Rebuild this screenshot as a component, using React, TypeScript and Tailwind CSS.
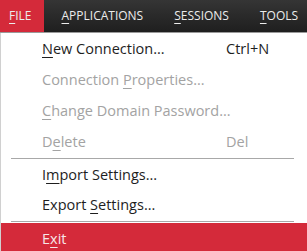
import React from "react";

const U = ({ children }: { children: React.ReactNode }) => (
  <span className="underline decoration-1 underline-offset-[3px]">{children}</span>
);

type Item = {
  pre: string;
  u: string;
  post: string;
  shortcut?: string;
  disabled?: boolean;
};

const Row = ({ it, h }: { it: Item; h: string }) => (
  <div className={`${h} flex items-center pl-[41px] ${it.disabled ? "text-[#a3a3a3]" : "text-[#1e1e1e]"}`}>
    <span className="w-[184px] whitespace-nowrap">
      {it.pre}
      <U>{it.u}</U>
      {it.post}
    </span>
    {it.shortcut && <span>{it.shortcut}</span>}
  </div>
);

const Sep = () => (
  <div className="h-[3px] flex items-center px-[10px]">
    <div className="h-px w-[283px] bg-[#a8a8a8]" />
  </div>
);

export default function App() {
  const top: Item[] = [
    { pre: "", u: "N", post: "ew Connection...", shortcut: "Ctrl+N" },
    { pre: "Connection ", u: "P", post: "roperties...", disabled: true },
    { pre: "", u: "C", post: "hange Domain Password...", disabled: true },
    { pre: "D", u: "e", post: "lete", shortcut: "Del", disabled: true },
  ];
  const mid: Item[] = [
    { pre: "I", u: "m", post: "port Settings..." },
    { pre: "Export ", u: "S", post: "ettings..." },
  ];
  return (
    <div className="w-[307px] h-[251px] overflow-hidden bg-white font-['Open_Sans','Noto_Sans',sans-serif]">
      <div className="h-[32px] flex items-stretch bg-gradient-to-b from-[#353535] to-[#1f1f1f] text-[12px] text-[#ececec]">
        <div className="bg-[#d42a3a] flex items-center pl-[9px] pr-[12px]">
          <span><U>F</U>ILE</span>
        </div>
        <div className="flex items-center pl-[18px] pr-[13px]">
          <span><U>A</U>PPLICATIONS</span>
        </div>
        <div className="flex items-center pl-[18px] pr-[13px]">
          <span><U>S</U>ESSIONS</span>
        </div>
        <div className="flex items-center pl-[18px] pr-[13px]">
          <span><U>T</U>OOLS</span>
        </div>
      </div>
      <div className="h-px bg-[#9a9a9a]" />
      <div className="text-[14.5px] border-l border-[#d0d0d0]">
        {top.map((it, i) => (
          <Row key={i} it={it} h="h-[31px]" />
        ))}
        <Sep />
        {mid.map((it, i) => (
          <Row key={i} it={it} h="h-[30px]" />
        ))}
        <Sep />
        <div className="h-[31px] flex items-center pl-[41px] bg-[#d42a3a] text-[#f7e6e8]">
          <span>E<U>x</U>it</span>
        </div>
      </div>
    </div>
  );
}
